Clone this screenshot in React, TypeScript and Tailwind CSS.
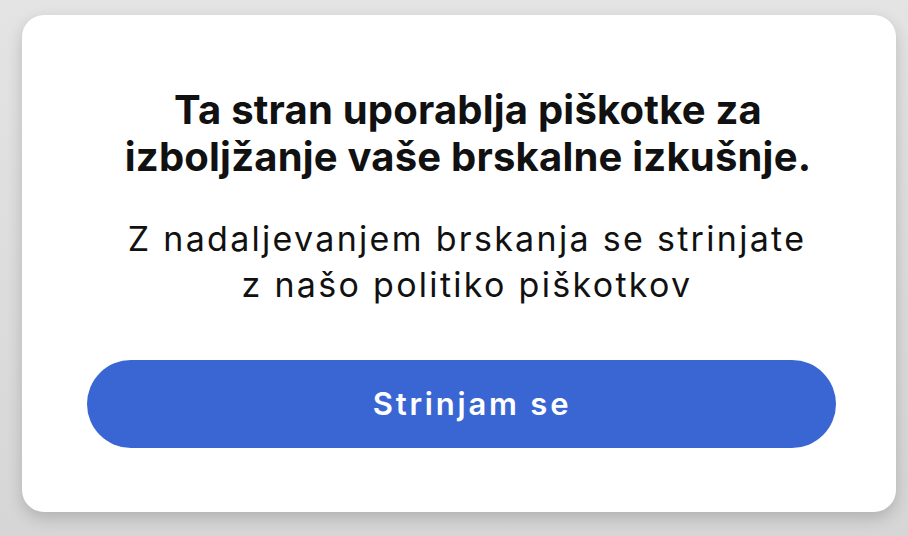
export default function App() {
  return (
    <div className="w-[908px] h-[536px] bg-gradient-to-b from-[#e4e4e4] to-[#d6d6d6] pt-[15px] pl-[22px] font-['Inter',sans-serif]">
      <div className="w-[874px] h-[497px] bg-white rounded-[22px] shadow-[0_6px_16px_rgba(0,0,0,0.18)] flex flex-col items-center pt-[71px]">
        <h1 className="ml-[18px] text-[40px] leading-[47px] font-bold text-[#111] text-center tracking-[0.2px]">
          Ta stran uporablja piškotke za
          <br />
          izboljžanje vaše brskalne izkušnje.
        </h1>
        <p className="ml-[16px] mt-[36px] text-[34px] leading-[46px] text-[#111] text-center tracking-[2.3px]">
          Z nadaljevanjem brskanja se strinjate
          <br />
          z našo politiko piškotkov
        </p>
        <button className="ml-[4px] mt-[52px] w-[749px] h-[88px] rounded-full bg-[#3a66d4] pl-[22px] text-white text-[31px] font-semibold tracking-[2.8px]">
          Strinjam se
        </button>
      </div>
    </div>
  );
}
